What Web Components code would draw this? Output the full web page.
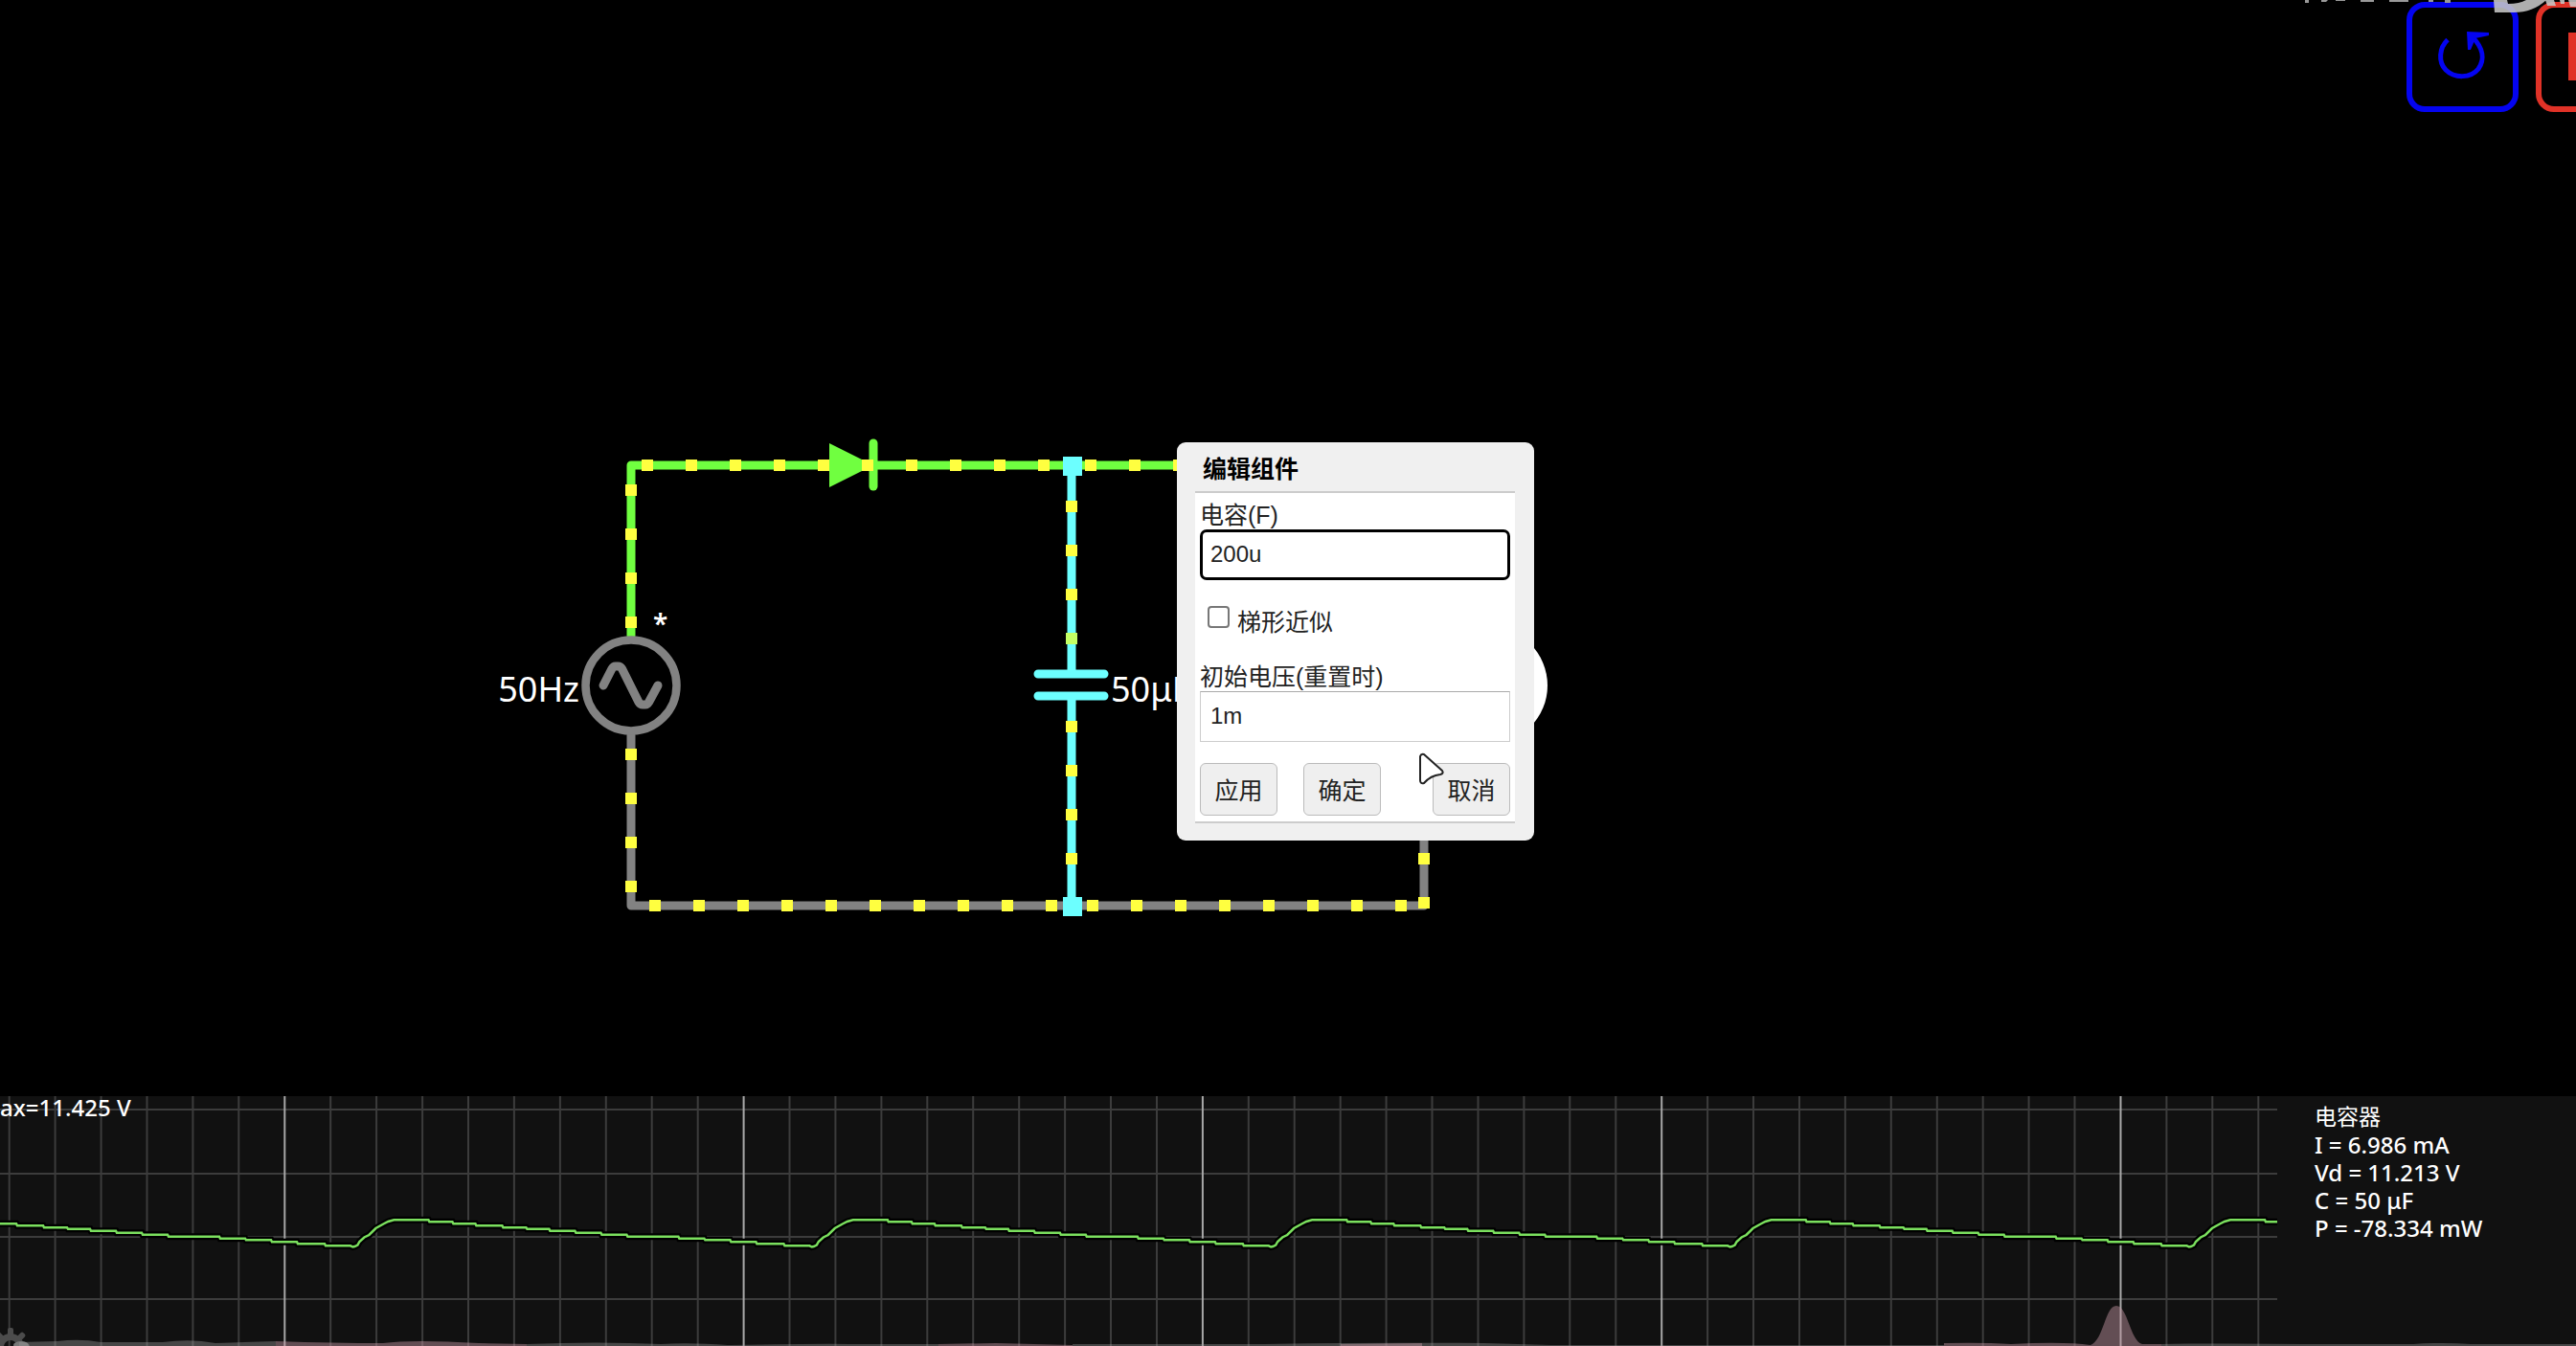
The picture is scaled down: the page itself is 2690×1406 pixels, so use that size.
<!DOCTYPE html>
<html lang="zh-CN">
<head>
<meta charset="utf-8">
<title>电路仿真</title>
<style>
  html, body { margin: 0; height: 100%; background: #000; overflow: hidden; }
  body { font-family: "Noto Sans", "Noto Sans CJK SC", sans-serif; color: #fff; }
</style>
</head>
<body>
<circuit-app></circuit-app>

<script>
const cjk = '"Liberation Sans", "Noto Sans CJK SC", sans-serif';

function mount(host, html) {
  const t = document.createElement('template');
  t.innerHTML = html;
  const root = host.attachShadow({ mode: 'open' });
  root.append(t.content.cloneNode(true));
  return root;
}

function range(from, step, count) {
  return Array.from({ length: count }, (_, i) => from + step * i);
}

class CircuitCanvas extends HTMLElement {
  connectedCallback() {
    const dot = (x, y, c) => `<rect x="${x - 6}" y="${y - 6}" width="12" height="12" fill="${c || '#ffff40'}"/>`;
    const row = (y, x, n) => range(x, 46, n).map(v => dot(v, y)).join('');
    const col = (x, y, n) => range(y, 46, n).map(v => dot(x, v)).join('');
    mount(this, `
      <style>
        :host { display: block; width: 100%; height: 100%; }
        svg { display: block; width: 100%; height: 100%; }
        text { fill: #fff; font-size: 36px; }
        .star { font-size: 28px; font-weight: 600; }
        .wire { fill: none; stroke-width: 9; stroke-linecap: round; stroke-linejoin: round; }
        .on { stroke: #70ff40; }
        .off { stroke: #828282; }
        .sel { stroke: #6cffff; }
      </style>
      <svg role="img" aria-label="电路图">
        <path class="wire off" d="M659 768V946H1487V716"/>
        <path class="wire on" d="M659 664V486H1487"/>
        <path class="wire on" d="M912 463V508"/>
        <path fill="#70ff40" d="M866 463L912 486L866 509Z"/>
        <path class="wire sel" d="M1119 486V704M1119 727V946M1084 704H1153M1084 727H1153"/>
        <circle cx="1555" cy="716" r="61" fill="#fff"/>
        <circle cx="659" cy="716" r="47.5" fill="#000" stroke="#828282" stroke-width="8.5"/>
        <path class="wire off" d="M630 716L639 698.5Q640.5 696 642.5 696H645.5Q648 696 649.5 698.5L667 733.5Q668.5 736 671 736H674Q676 736 677.5 733.5L687 716"/>
        ${row(486, 676, 10)}${row(486, 1139, 3)}
        ${col(659, 512, 4)}${col(659, 788, 4)}
        ${row(946, 684, 10)}${row(946, 1141, 8)}
        ${col(1119, 529, 3)}${dot(1119, 667, '#c4ff64')}${col(1119, 759, 4)}
        ${col(1487, 897, 2)}
        <path fill="#6cffff" d="M1110 477h20v20h-20zM1110 937h20v20h-20z"/>
        <text x="605" y="733" text-anchor="end">50Hz</text>
        <text x="1160" y="733">50μF</text>
        <text class="star" x="682" y="662">*</text>
      </svg>`);
  }
}
customElements.define('circuit-canvas', CircuitCanvas);

/* Square outlined button of the top toolbar */
class ToolButton extends HTMLElement {
  connectedCallback() {
    mount(this, `
      <style>
        :host { display: block; }
        button { display: grid; place-items: center; box-sizing: border-box; width: 117px; height: 115px; padding: 0;
          border: 6px solid currentColor; border-radius: 19px; background: #000; color: inherit; }
      </style>
      <button type="button" aria-label="${this.getAttribute('label')}"><slot></slot></button>`);
  }
}
customElements.define('tool-button', ToolButton);

/* Cropped channel watermark along the top edge */
class ChannelMark extends HTMLElement {
  connectedCallback() {
    mount(this, `
      <style>:host, svg { display: block; }</style>
      <svg width="300" height="16" aria-hidden="true">
        <g fill="#999">
          <path d="M17 0h4v3h-4zM34 0h7l-2 2h-5zM49 0h10v1H49zM75 0h14v2H75zM105 0h20v2h-20zM146 0h5v2h-5zM163 0h6v3h-6z"/>
        </g>
        <path fill="#c6c6c6" opacity=".88" d="M214 0h14l1 4Q241 4 248 0H269Q255 13 235 13H215Z"/>
        <path fill="#c6c6c6" opacity=".88" d="M268 0h9l2 6h-9zM283 0h5v4h-4zM292 0h8v7h-6z"/>
      </svg>`);
  }
}
customElements.define('channel-mark', ChannelMark);

class TextField extends HTMLElement {
  connectedCallback() {
    mount(this, `
      <style>
        :host { display: flex; flex-direction: column; gap: 1px; }
        label { line-height: 27px; }
        input { box-sizing: border-box; width: 100%; height: 53px; padding: 0 10px 2px; border: 1px solid #ccc; border-top-color: #aaa;
          background: #fff; color: #222; font: 24px ${cjk}; outline: none; }
        :host([active]) input { border: 3px solid #000; border-radius: 7px; padding: 0 8px 2px; }
      </style>
      <label for="f"><slot></slot></label>
      <input id="f" type="text" value="${this.getAttribute('value')}">`);
  }
}
customElements.define('text-field', TextField);

class CheckField extends HTMLElement {
  connectedCallback() {
    mount(this, `
      <style>
        :host { display: flex; align-items: flex-start; gap: 8px; padding-left: 8px; }
        input { appearance: none; box-sizing: border-box; width: 23px; height: 23px; margin: 0; border: 2px solid #777; border-radius: 4px; background: #fff; }
        label { line-height: 34px; }
      </style>
      <input id="c" type="checkbox"><label for="c"><slot></slot></label>`);
  }
}
customElements.define('check-field', CheckField);

class DialogButton extends HTMLElement {
  connectedCallback() {
    mount(this, `
      <style>
        :host { display: block; }
        button { box-sizing: border-box; width: 81px; height: 55px; padding: 0 0 2px; border: 1px solid #bbb; border-radius: 6px;
          background: #efefef; color: #222; font: 25px ${cjk}; }
      </style>
      <button type="button"><slot></slot></button>`);
  }
}
customElements.define('dialog-button', DialogButton);

class EditDialog extends HTMLElement {
  connectedCallback() {
    mount(this, `
      <style>
        :host { display: block; box-sizing: border-box; width: 373px; padding: 0 20px 18px 19px; border-radius: 9px;
          background: #f0f0f0; color: #222; font: 25px ${cjk}; }
        h2 { margin: 0; padding: 5px 0 0 8px; font-size: 25px; line-height: 46px; color: #000; }
        form { display: flex; flex-direction: column; padding: 10px 5px 6px; border: solid #ccc; border-width: 2px 0; background: #fff; }
        check-field { margin: 27px 0; }
        .actions { display: flex; gap: 27px; margin-top: 22px; }
        .actions :last-child { margin-left: auto; }
      </style>
      <h2>编辑组件</h2>
      <form>
        <text-field active value="200u">电容(F)</text-field>
        <check-field>梯形近似</check-field>
        <text-field value="1m">初始电压(重置时)</text-field>
        <div class="actions">
          <dialog-button>应用</dialog-button>
          <dialog-button>确定</dialog-button>
          <dialog-button>取消</dialog-button>
        </div>
      </form>`);
  }
}
customElements.define('edit-dialog', EditDialog);

/* Oscilloscope plot */
class ScopePlot extends HTMLElement {
  connectedCallback() {
    const pitch = 47.93;
    const lines = range(9.7, pitch, 50).map((x, i) =>
      `<path d="M${x.toFixed(1)} 0V261" stroke="${i % 10 === 6 ? '#a8a8a8' : '#3c3c3c'}"/>`).join('');
    const rows = [14, 81, 147, 212].map(y => `<path d="M0 ${y}H2378" stroke="#3c3c3c"/>`).join('');
    /* one charging cycle: quick rise, then a stepped discharge */
    const rise = [[0, 157.5], [2, 157], [5, 155.5], [7, 152], [12, 147.5], [17, 145], [24, 138], [32, 133.5], [37, 131], [43, 129.3]];
    const steps = [[79, 129.3], [104, 131.3], [128, 133.3], [156, 135.3], [181, 137.3], [205, 138.7], [232, 140.7], [259, 142.7], [286, 144.7], [340, 146.7], [367, 148.7], [394, 150.3], [421, 152.3], [450, 154.3], [477, 156.3]];
    const pts = [];
    for (const start of range(-111, 479.4, 6)) {
      for (const [x, y] of rise) pts.push([start + x, y]);
      let last = null;
      for (const [x, y] of steps) {
        if (last) pts.push([start + last + 1, y]);
        pts.push([start + x, y]);
        last = x;
      }
    }
    const d = 'M' + pts.map(p => p[0].toFixed(1) + ' ' + p[1]).join('L');
    mount(this, `
      <style>
        :host { display: block; overflow: hidden; }
        svg { display: block; width: 100%; height: 100%; }
        text { fill: #fff; font-size: 24px; font-weight: 500; }
      </style>
      <svg role="img" aria-label="波形">
        <g stroke-width="2">${rows}${lines}</g>
        <path d="${d}" fill="none" stroke="#000" stroke-width="7"/>
        <path d="${d}" fill="none" stroke="#7be05e" stroke-width="2.5"/>
        <text x="0" y="21">ax=11.425 V</text>
      </svg>`);
  }
}
customElements.define('scope-plot', ScopePlot);

class ScopeInfo extends HTMLElement {
  connectedCallback() {
    mount(this, `
      <style>
        :host { display: block; padding: 7px 0 0 39px; font-size: 24px; font-weight: 500; line-height: 29px; white-space: nowrap; }
        h3 { margin: 0; font-size: 23px; font-weight: 400; line-height: 29px; }
      </style>
      <h3><slot name="name"></slot></h3>
      <slot></slot>`);
  }
}
customElements.define('scope-info', ScopeInfo);

/* Viewing-density strip over the bottom edge, with its settings gear */
class HeatStrip extends HTMLElement {
  connectedCallback() {
    const teeth = range(0, 45, 8).map(a => `<rect x="-3" y="-20" width="6" height="10" rx="2" transform="rotate(${a})"/>`).join('');
    mount(this, `
      <style>:host, svg { display: block; width: 100%; }</style>
      <svg height="46" aria-hidden="true">
        <g fill="#4c4c4c" transform="translate(11 47)">${teeth}
          <path fill-rule="evenodd" d="M-14 0a14 14 0 1 0 28 0a14 14 0 1 0-28 0M-7 0a7 7 0 1 1 14 0a7 7 0 1 1-14 0"/>
        </g>
        <ellipse cx="22" cy="45" rx="8" ry="4" fill="#777"/>
        <path fill="#999" opacity=".4" d="M20 46V42L60 41Q84 38 105 42H170Q200 38 225 43L288 41V46ZM550 46V44Q625 41 690 44Q720 42 760 45Q870 43 890 44H980V46ZM1120 46V44H1320Q1410 42 1550 43L1620 45H2030V46ZM2257 46V44Q2300 43 2420 44H2520Q2550 42 2580 44H2690V46Z"/>
        <path fill="#c092a0" opacity=".47" d="M288 46V41Q350 43 400 43Q430 39 500 43L550 44V46ZM980 46V44L1040 43L1120 45V46ZM1400 46V44L1485 43V46ZM2030 46V43Q2070 42 2100 44Q2155 41 2183 45C2197 40 2198 4 2210 4C2222 4 2224 40 2237 44H2257V46Z"/>
      </svg>`);
  }
}
customElements.define('heat-strip', HeatStrip);

class CircuitApp extends HTMLElement {
  connectedCallback() {
    mount(this, `
      <style>
        :host { display: flex; flex-direction: column; height: 100vh; overflow: hidden; position: relative; }
        main { flex: 1; min-height: 0; position: relative; }
        .tools { position: absolute; top: 2px; right: -75px; display: flex; gap: 18px; }
        .reset { color: #0404f0; }
        .run { color: #e03227; }
        channel-mark { position: absolute; top: 0; right: 0; }
        edit-dialog { position: absolute; left: 1229px; top: 462px; }
        .cursor { position: absolute; left: 1480px; top: 785px; }
        footer { display: flex; height: 261px; background: #111; }
        scope-plot { flex: 1; min-width: 0; }
        scope-info { flex: 0 0 273px; }
        heat-strip { position: absolute; left: 0; bottom: 0; }
      </style>
      <main>
        <circuit-canvas></circuit-canvas>
        <div class="tools">
          <tool-button class="reset" label="重置">
            <svg width="60" height="64" viewBox="0 0 60 64" fill="none" stroke="currentColor">
              <path stroke-width="5" d="M14 13.5C5 22 4 37 12 45C21 54 38 54 46 44C53 34 51 22 40 11"/>
              <path fill="currentColor" stroke="none" d="M34 5L57 6V9L43 12L38 24H35Z"/>
            </svg>
          </tool-button>
          <tool-button class="run" label="运行 / 停止">
            <svg width="50" height="52"><rect width="50" height="50" fill="currentColor"/></svg>
          </tool-button>
        </div>
        <channel-mark></channel-mark>
        <edit-dialog></edit-dialog>
        <svg class="cursor" width="30" height="38" aria-hidden="true">
          <path fill="#fff" stroke="#222" stroke-width="2" stroke-linejoin="round" d="M3 5Q4 2 7 3L26 20Q28 23 24 24Q14 25 7 33Q3 34 3 30Z"/>
        </svg>
      </main>
      <footer>
        <scope-plot></scope-plot>
        <scope-info>
          <span slot="name">电容器</span>
          <div>I = 6.986 mA</div>
          <div>Vd = 11.213 V</div>
          <div>C = 50 μF</div>
          <div>P = -78.334 mW</div>
        </scope-info>
      </footer>
      <heat-strip></heat-strip>`);
  }
}
customElements.define('circuit-app', CircuitApp);
</script>
</body>
</html>
